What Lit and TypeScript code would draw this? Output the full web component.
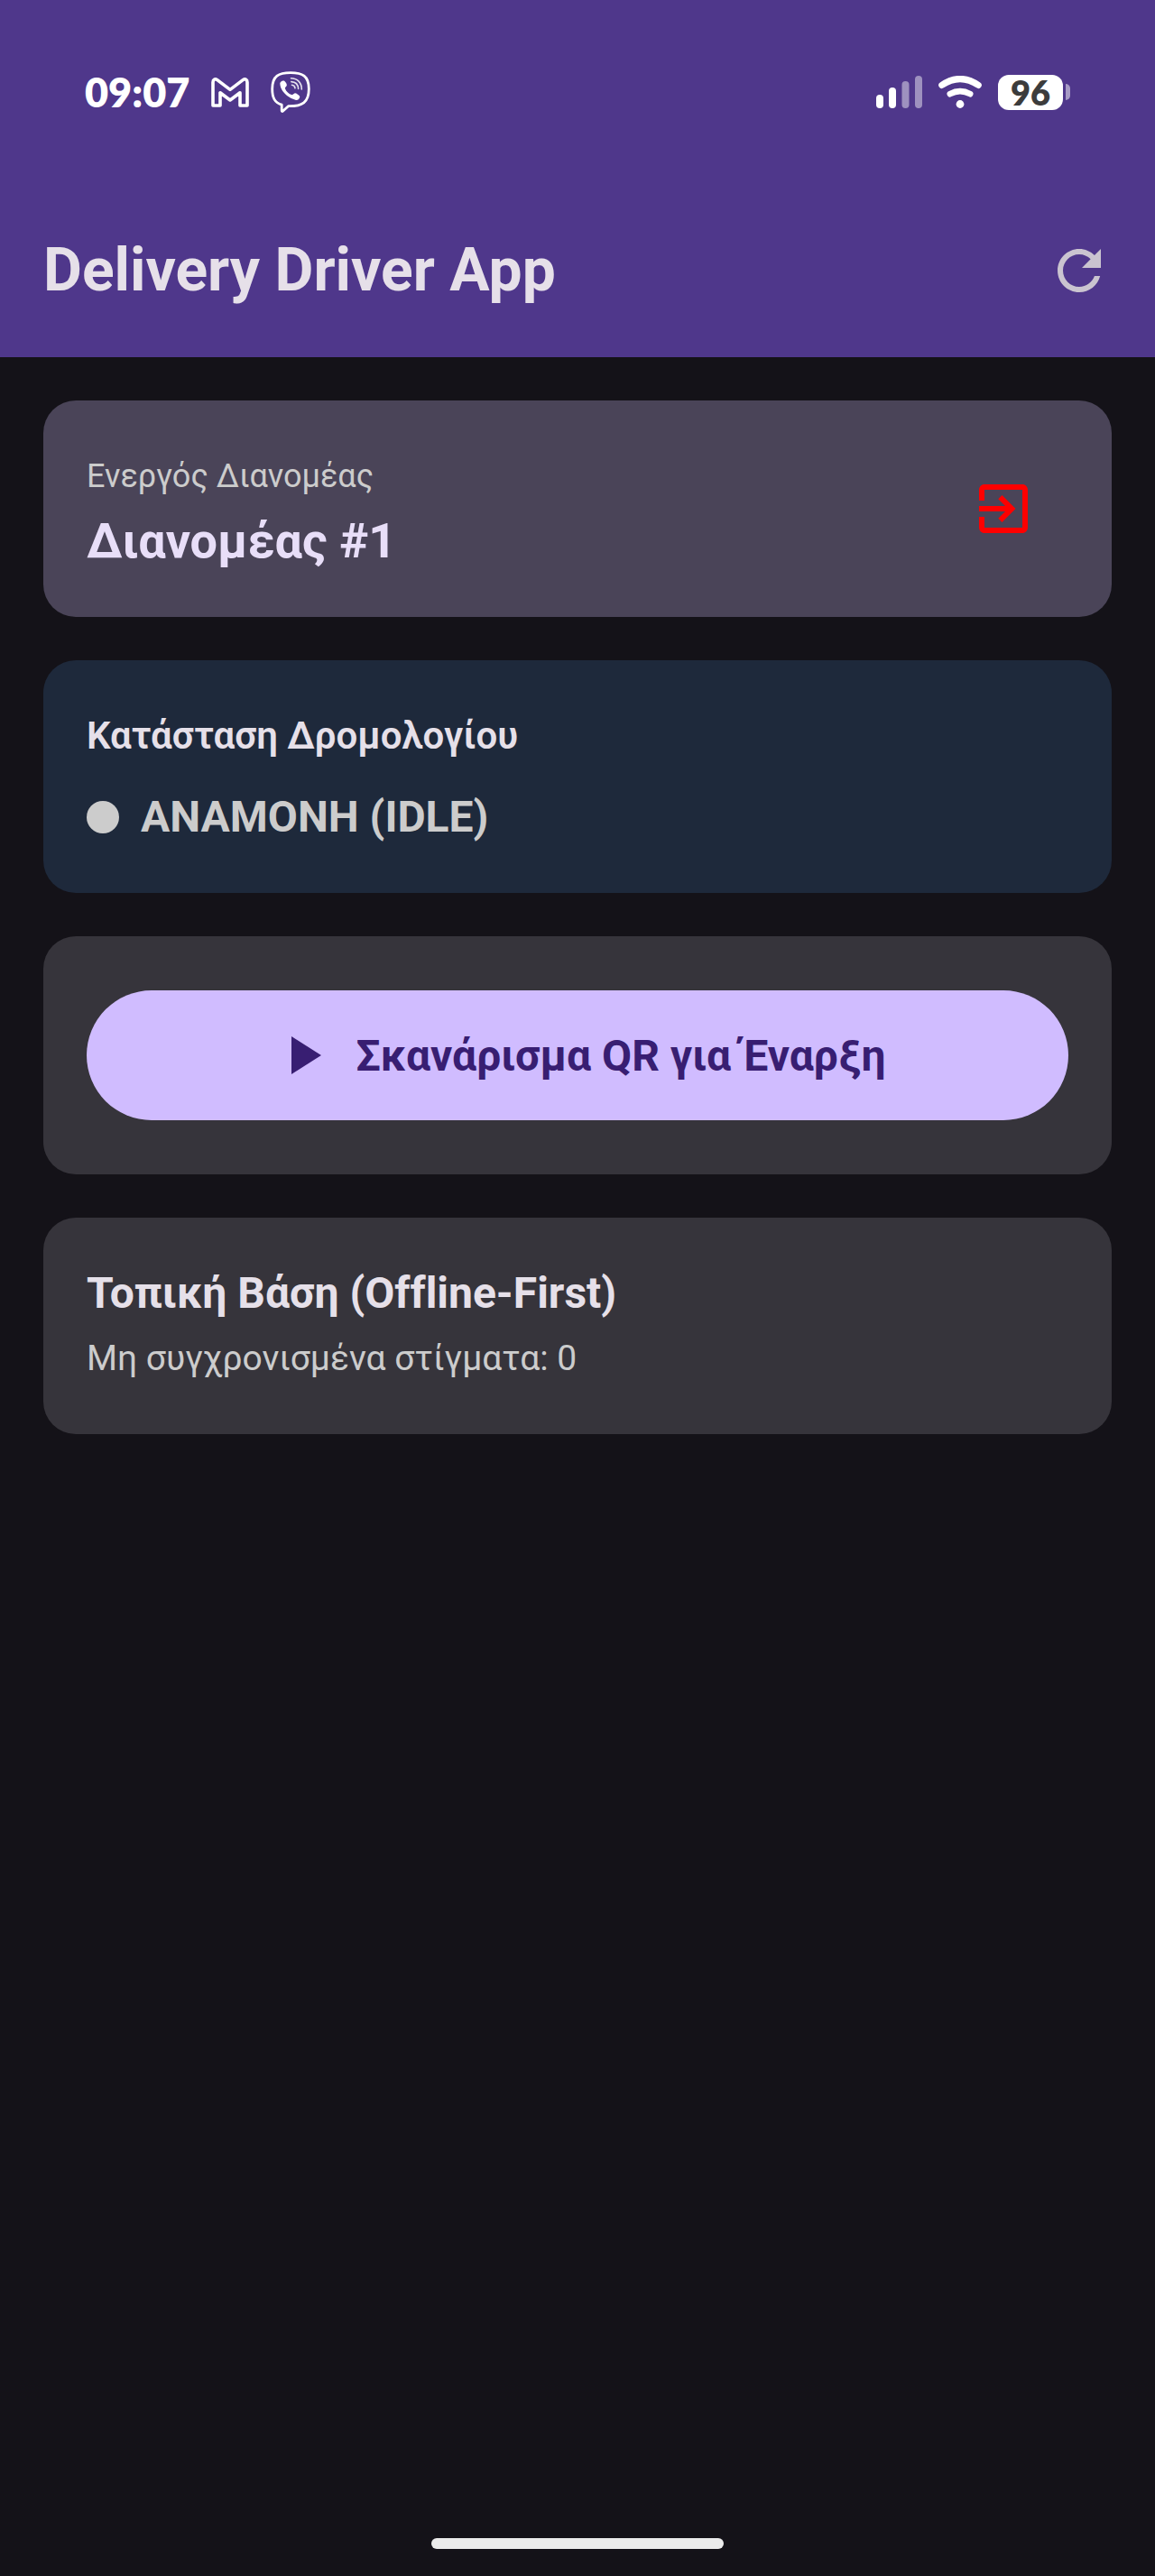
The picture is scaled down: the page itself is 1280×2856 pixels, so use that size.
import { LitElement, html, css, svg } from "lit";
import { customElement, state } from "lit/decorators.js";

@customElement("status-bar")
export class StatusBar extends LitElement {
  static styles = css`
    :host {
      display: flex;
      align-items: center;
      justify-content: space-between;
      height: 204px;
      padding: 0 94px;
      box-sizing: border-box;
      color: #fff;
      font-family: Lato, "Liberation Sans", sans-serif;
      font-weight: 800;
    }
    .group {
      display: flex;
      align-items: center;
    }
    .left {
      gap: 24px;
    }
    .right {
      gap: 18px;
    }
    .time {
      font-size: 45px;
      line-height: 48px;
    }
    svg {
      display: block;
      flex: none;
    }
    .battery {
      display: flex;
      align-items: center;
      gap: 3px;
    }
    .level {
      display: flex;
      align-items: center;
      justify-content: center;
      width: 72px;
      height: 39px;
      border-radius: 12px;
      background: #fff;
      color: #3c3c3c;
      font-size: 38px;
      line-height: 39px;
    }
    .nub {
      width: 5px;
      height: 18px;
      border-radius: 0 5px 5px 0;
      background: #a79bc5;
    }
  `;

  render() {
    return html`
      <div class="group left">
        <span class="time">09:07</span>
        <svg width="42" height="33" viewBox="0 0 42 33" fill="none" aria-hidden="true">
          <path
            d="M2 31V5.2C2 2 4.6 0.9 6.8 2.6L21 13.4L35.2 2.6C37.4 0.9 40 2 40 5.2V31H32V16.8L21 25L10 16.8V31Z"
            stroke="#fff"
            stroke-width="3.6"
            stroke-linejoin="round"
          />
        </svg>
        <svg width="44" height="46" viewBox="0 0 44 46" fill="none" aria-hidden="true">
          <path
            d="M22 1.6C35 1.6 42.3 5 42.3 19.5C42.3 34.5 35 39 19.5 38.7L13.4 44.3C12.6 44.8 12.2 44.4 12.2 43.6V37.2C4.3 34.6 1.7 29.5 1.7 19.5C1.7 5 9 1.6 22 1.6Z"
            stroke="#fff"
            stroke-width="2.8"
            stroke-linejoin="round"
          />
          <path
            d="M10.3 13.5C10.3 11.5 13.5 9.5 15.2 10.8C16.8 12.3 18.2 14.5 17.8 15.8C17.3 17.3 15.6 17.8 16 19.3C17 22.3 19.8 25 23 26C24.5 26.3 25 24.8 26.5 24.4C28 24 31 26.2 32 27.6C33 29.2 30.8 32 29 32C26 32 11 26 10.3 13.5Z"
            fill="#fff"
          />
          <path
            d="M22.5 7.8C29.5 7.8 34.3 12.6 34.3 20M22.8 11.6C27.5 11.8 30.4 14.8 30.6 19.4M23.5 15.3C25.5 15.5 26.8 16.8 27 18.8"
            stroke="#fff"
            stroke-width="1.6"
            stroke-linecap="round"
            opacity="0.85"
          />
        </svg>
      </div>
      <div class="group right">
        <svg width="51" height="36" viewBox="0 0 51 36" fill="#fff" aria-hidden="true">
          ${[
            [0, 15, 1],
            [14, 23, 1],
            [28.5, 30, 0.45],
            [43, 36, 0.45],
          ].map(
            ([x, h, o]) =>
              svg`<rect x=${x} y=${36 - h} width="8" height=${h} rx="4" opacity=${o}></rect>`
          )}
        </svg>
        <svg width="48" height="36" viewBox="0 0 48 36" fill="none" aria-hidden="true">
          <path
            d="M3.8 10.4Q24 -3.4 44.2 10.4"
            stroke="#fff"
            stroke-width="7.2"
            stroke-linecap="round"
          />
          <path
            d="M12.8 20.2Q24 14.2 35.2 20.2"
            stroke="#fff"
            stroke-width="6.6"
            stroke-linecap="round"
          />
          <circle cx="24" cy="31.5" r="4.4" fill="#fff" />
        </svg>
        <div class="battery">
          <span class="level">96</span>
          <span class="nub"></span>
        </div>
      </div>
    `;
  }
}

@customElement("app-root")
export class AppRoot extends LitElement {
  static styles = css`
    :host {
      display: flex;
      flex-direction: column;
      min-height: 100vh;
      box-sizing: border-box;
      padding-bottom: 30px;
      background: #141218;
      color: #e6e0e9;
      font-family: Roboto, "Noto Sans", sans-serif;
      font-variant-ligatures: none;
    }
    .header {
      background: #4f378b;
    }
    .toolbar {
      display: flex;
      align-items: center;
      justify-content: space-between;
      height: 192px;
      padding: 0 12px 0 48px;
    }
    h1,
    h2,
    p {
      margin: 0;
      line-height: 72px;
    }
    h1 {
      font-size: 66px;
      font-weight: 700;
    }
    button {
      border: 0;
      padding: 0;
      background: none;
      font: inherit;
      cursor: pointer;
    }
    .icon-button {
      display: flex;
      align-items: center;
      justify-content: center;
      width: 144px;
      height: 144px;
      flex: none;
      border-radius: 50%;
    }
    .refresh {
      color: #cac4d0;
    }
    .logout {
      color: #ff0000;
    }
    svg {
      display: block;
      flex: none;
      width: 72px;
      height: 72px;
      fill: currentColor;
    }
    main {
      display: flex;
      flex-direction: column;
      gap: 48px;
      padding: 48px;
    }
    .card {
      padding: 48px;
      border-radius: 36px;
      background: #36343b;
    }
    .driver {
      display: flex;
      align-items: center;
      justify-content: space-between;
      background: #4a4458;
    }
    .caption {
      font-size: 36px;
      color: #cccccc;
    }
    .driver-name {
      font-size: 54px;
      font-weight: 700;
      color: #e8def8;
    }
    .route {
      display: flex;
      flex-direction: column;
      gap: 18px;
      background: #1e293b;
    }
    .route-title {
      font-size: 42px;
      font-weight: 600;
    }
    .state {
      display: flex;
      align-items: center;
      gap: 24px;
      font-size: 48px;
      font-weight: 700;
      color: #cccccc;
    }
    .dot {
      width: 36px;
      height: 36px;
      border-radius: 50%;
      background: #cccccc;
    }
    .actions {
      padding: 60px 48px;
    }
    .scan {
      display: flex;
      align-items: center;
      justify-content: center;
      gap: 24px;
      width: 100%;
      height: 144px;
      border-radius: 72px;
      background: #d0bcff;
      color: #381e72;
      font-size: 48px;
      font-weight: 700;
    }
    .base-title {
      font-size: 48px;
      font-weight: 700;
    }
    .detail {
      font-size: 39px;
      color: #cccccc;
    }
    .home {
      width: 324px;
      height: 12px;
      margin: auto auto 0;
      border-radius: 6px;
      background: #ebebeb;
    }
  `;

  @state() private pending = 0;

  render() {
    return html`
      <header class="header">
        <status-bar></status-bar>
        <div class="toolbar">
          <h1>Delivery Driver App</h1>
          <button class="icon-button refresh" type="button" aria-label="Ανανέωση">
            <svg viewBox="0 0 24 24" aria-hidden="true">
              <path
                d="M17.65 6.35C16.2 4.9 14.21 4 12 4c-4.42 0-7.99 3.58-7.99 8s3.57 8 7.99 8c3.73 0 6.84-2.55 7.73-6h-2.08c-.82 2.33-3.04 4-5.65 4-3.31 0-6-2.69-6-6s2.69-6 6-6c1.66 0 3.14.69 4.22 1.78L13 11h7V4l-2.35 2.35z"
              />
            </svg>
          </button>
        </div>
      </header>
      <main>
        <section class="card driver">
          <div>
            <p class="caption">Ενεργός Διανομέας</p>
            <h2 class="driver-name">Διανομέας #1</h2>
          </div>
          <button class="icon-button logout" type="button" aria-label="Αποσύνδεση">
            <svg viewBox="0 0 24 24" aria-hidden="true">
              <path
                d="M10.09 15.59L11.5 17l5-5-5-5-1.41 1.41L12.67 11H3v2h9.67l-2.58 2.59zM19 3H5c-1.11 0-2 .9-2 2v4h2V5h14v14H5v-4H3v4c0 1.1.89 2 2 2h14c1.1 0 2-.9 2-2V5c0-1.1-.9-2-2-2z"
              />
            </svg>
          </button>
        </section>
        <section class="card route">
          <h2 class="route-title">Κατάσταση Δρομολογίου</h2>
          <p class="state"><span class="dot"></span>ΑΝΑΜΟΝΗ (IDLE)</p>
        </section>
        <section class="card actions">
          <button class="scan" type="button">
            <svg viewBox="0 0 24 24" aria-hidden="true"><path d="M8 5v14l11-7z" /></svg>
            Σκανάρισμα QR για Έναρξη
          </button>
        </section>
        <section class="card">
          <h2 class="base-title">Τοπική Βάση (Offline-First)</h2>
          <p class="detail">Μη συγχρονισμένα στίγματα: ${this.pending}</p>
        </section>
      </main>
      <div class="home"></div>
    `;
  }
}
